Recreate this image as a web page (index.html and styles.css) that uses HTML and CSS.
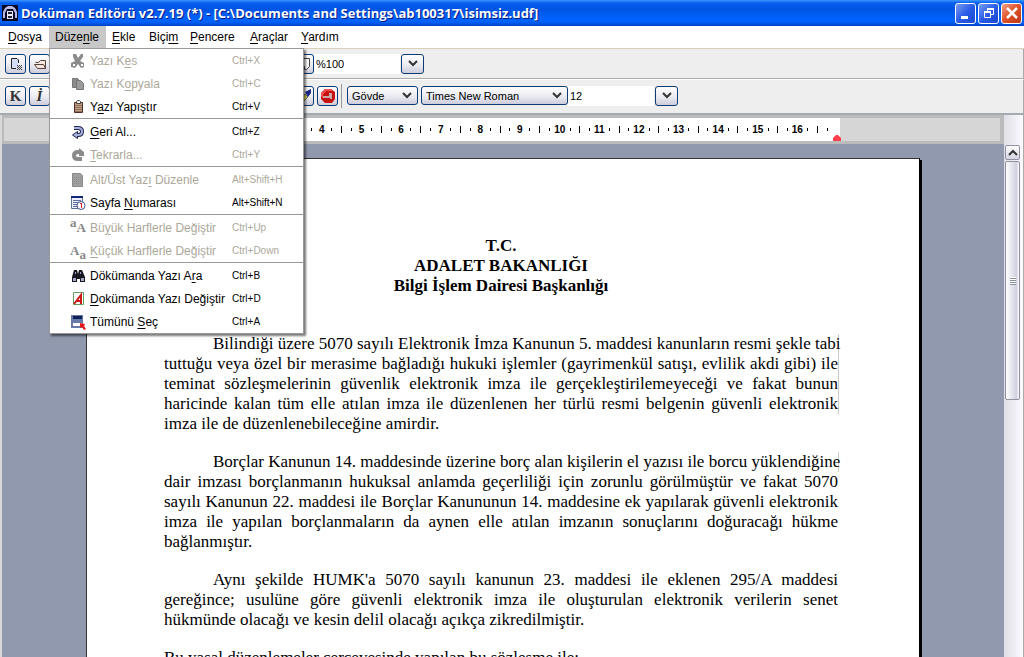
FILE: index.html
```html
<!DOCTYPE html>
<html lang="tr">
<head>
<meta charset="utf-8">
<title>Doküman Editörü</title>
<link rel="stylesheet" href="styles.css">
</head>
<body>
<div class="app">
<header class="titlebar">
<svg class="logo" width="16" height="16" viewBox="0 0 16 16"><path fill="#080820" d="M0 0h16v16H0z"/><path fill="#b8b8e8" d="M1 13V7l2-4 3-2h4l3 2 2 4v6h-2V8l-2-4H5L3 8v5z"/><path fill="#e8e8ff" d="M5 6h6v8H5z"/><path fill="#223" d="M6 7h4v2H6zM6 11h4v2H6z"/></svg>
<h1 class="title">Doküman Editörü v2.7.19 (*) - [C:\Documents and Settings\ab100317\isimsiz.udf]</h1>
<div class="winbtns">
<button class="winbtn" aria-label="Simge durumuna küçült"><svg width="18" height="18"><path fill="#fff" d="M4 12h7v3H4z"/></svg></button>
<button class="winbtn" aria-label="Önceki boyut"><svg width="18" height="18" fill="none" stroke="#fff"><path d="M7.500 7V4.500h6v6H11M4.500 8.500h6v5h-6z"/><path stroke-width="2" d="M7 5h7M4 8h7"/></svg></button>
<button class="winbtn close" aria-label="Kapat"><svg width="18" height="18"><path stroke="#fff" stroke-width="2.500" d="M4 4l10 10M14 4L4 14"/></svg></button>
</div>
</header>
<nav class="menubar">
<button><u>D</u>osya</button><button class="open">Düze<u>n</u>le</button><button><u>E</u>kle</button><button>Biçi<u>m</u></button><button><u>P</u>encere</button><button><u>A</u>raçlar</button><button><u>Y</u>ardım</button>
<div class="menu">
<button class="item" disabled><svg width="16" height="16"><path fill="#8b8b8b" d="M3 1h3l2 4 3-4h2v3l-3 4 4 2v4l-3 1-3-4-3 4-4-1v-4l4-2-2-4z"/><path fill="#fff" d="M3 11h2v2H3zM11 11h2v2h-2z"/></svg><span>Yazı K<u>e</u>s</span><kbd>Ctrl+X</kbd></button>
<button class="item" disabled><svg width="16" height="16"><path fill="#8b8b8b" stroke="#777" d="M2.500 2.500h5l2 2v7h-7z"/><path fill="#9b9b9b" stroke="#777" d="M6.500 4.500h4l3 3v6h-7z"/></svg><span>Yazı K<u>o</u>pyala</span><kbd>Ctrl+C</kbd></button>
<button class="item"><svg width="16" height="16"><path fill="#c0a088" stroke="#503028" d="M4.500 3.500h8v10h-8z"/><path stroke="#907058" stroke-width="7" stroke-dasharray="1 1" d="M8.500 6v7"/><path fill="#eee" stroke="#444" d="M6.500 4.500v-2l1-1h2l1 1v2z"/></svg><span>Y<u>a</u>zı Yapıştır</span><kbd>Ctrl+V</kbd></button>
<hr>
<button class="item"><svg width="16" height="16"><path fill="none" stroke="#202850" stroke-width="4" d="M4 4h4q4 0 4 3.500T8 11H6"/><path fill="#a8b0e0" stroke="#202850" d="M7.500 7.500v7l-5-3.500z"/><path fill="none" stroke="#a8b0e0" stroke-width="2" d="M4 4h4q4 0 4 3.500T8 11H6"/></svg><span><u>G</u>eri Al...</span><kbd>Ctrl+Z</kbd></button>
<button class="item" disabled><svg width="16" height="16"><path fill="none" stroke="#8b8b8b" stroke-width="4" d="M10 5H8Q4 5 4 8.500T8 12h4"/><path fill="#8b8b8b" d="M9 1l5 4v4H9z"/></svg><span><u>T</u>ekrarla...</span><kbd>Ctrl+Y</kbd></button>
<hr>
<button class="item" disabled><svg width="16" height="16"><path fill="#a0a0a0" stroke="#8b8b8b" d="M2.500 1.500h8l2 2v11h-10z"/><path stroke="#8b8b8b" stroke-dasharray="1 1" d="M4 5.500h8M4 7.500h8M4 9.500h8M4 11.500h8"/></svg><span>Alt/Üst Yaz<u>ı</u> Düzenle</span><kbd>Alt+Shift+H</kbd></button>
<button class="item"><svg width="16" height="16"><path fill="#eef" stroke="#607098" d="M1.500 1.500h11v12h-11z"/><path fill="#102878" d="M1 1h12v2H1z"/><path stroke="#6070a0" d="M3 5.500h8M3 7.500h5M3 9.500h4M3 11.500h4"/><circle cx="11" cy="10.500" r="4" fill="#fff" stroke="#405090"/><path fill="#e02020" d="M10 8h2v5h-1v-4h-1z"/></svg><span>Sayfa <u>N</u>umarası</span><kbd>Alt+Shift+N</kbd></button>
<hr>
<button class="item" disabled><span class="glyph"><sup>a</sup>A</span><span>Bü<u>y</u>ük Harflerle Değiştir</span><kbd>Ctrl+Up</kbd></button>
<button class="item" disabled><span class="glyph">A<sub>a</sub></span><span><u>K</u>üçük Harflerle Değiştir</span><kbd>Ctrl+Down</kbd></button>
<hr>
<button class="item"><svg width="16" height="16"><path fill="#181820" d="M4 2h3l1 4 1-4h3l3 7v5h-5v-3H7v3H2V9z"/><path fill="#a0a8c8" d="M3 10h3v3H3zM11 10h3v3h-3zM5 4h1v2H5zM10 4h1v2h-1z"/></svg><span>Dökümanda Yazı A<u>r</u>a</span><kbd>Ctrl+B</kbd></button>
<button class="item"><svg width="16" height="16"><path fill="#fff" stroke="#60a060" d="M3.500 1.500h10v12h-10z"/><path fill="none" stroke="#d01818" stroke-width="2" d="M4 13l7-9v9M7 10h4"/></svg><span><u>D</u>okümanda Yazı Değiştir</span><kbd>Ctrl+D</kbd></button>
<button class="item"><svg width="16" height="16"><path fill="#6878a8" d="M1 1h12v13H1z"/><path fill="#102058" d="M3 2h9v3H3z"/><path fill="#fff" d="M3 9h9v3H3z"/><path fill="#e81818" d="M10 9l5 1-1 2 2 3-2 1-2-3-2 1z"/></svg><span>Tümünü <u>S</u>eç</span><kbd>Ctrl+A</kbd></button>
</div>
</nav>
<div class="toolbar">
<div class="group">
<button class="tool" aria-label="Yeni"><svg width="16" height="16"><path fill="#d4dcfa" d="M4 3h6v9H4z"/><path fill="none" stroke="#222" d="M10.500 7V4l-1.500-1.500H3.500v10H8"/><path fill="#444" d="M9 9h1v1H9zM11 9h1v1h-1zM13 9h1v1h-1zM10 10h1v1h-1zM12 10h1v1h-1zM9 11h1v1H9zM11 11h1v1h-1zM13 11h1v1h-1zM10 12h1v1h-1zM12 12h1v1h-1zM9 13h1v1H9zM11 13h1v1h-1zM13 13h1v1h-1z"/></svg></button>
<button class="tool" aria-label="Aç"><svg width="16" height="16"><path fill="#f4e8e0" stroke="#5a4038" d="M3.500 6.500h3l2-2h5v8h-8l-3-4h9l2 4"/></svg></button>
</div>
<button class="tool" aria-label="Görünüm"><svg width="16" height="16"><path fill="#fff" stroke="#444" d="M4.500 2.500h9v8l-3 3h-2v-3h-4z"/></svg></button>
<input class="field" aria-label="Yakınlaştırma" value="%100">
<button class="tool drop" aria-label="Yakınlaştırma seç"><svg width="10" height="7"><path class="chev" d="M1 1l4 4 4-4"/></svg></button>
</div>
<div class="toolbar second">
<div class="group">
<button class="tool letter">K</button>
<button class="tool letter italic">İ</button>
</div>
<button class="tool" aria-label="Biçim boyacısı"><svg width="16" height="16"><path fill="#d8d850" stroke="#777" d="M5 11l4-5 3 3-4 4z"/><path fill="#182888" d="M9 4l6-3v4l-3 4z"/></svg></button>
<button class="tool" aria-label="Dur"><svg width="18" height="18"><path fill="#c81010" d="M6 2h6l4 3v7l-3 4H6l-4-4V6z"/><path fill="#f05050" d="M6 2h6l2 2H7L4 8v3L2 9V6z"/><path fill="#c8a8a8" d="M4 9h6V6h3v6h-2v-1H4z"/></svg></button>
<span class="divider"></span>
<span class="pick style"><select aria-label="Stil"><option>Gövde</option></select><svg width="10" height="7"><path class="chev" d="M1 1l4 4 4-4"/></svg></span>
<span class="pick font"><select aria-label="Yazı tipi"><option>Times New Roman</option></select><svg width="10" height="7"><path class="chev" d="M1 1l4 4 4-4"/></svg></span>
<input class="field size" aria-label="Boyut" value="12">
<button class="tool drop" aria-label="Boyut seç"><svg width="10" height="7"><path class="chev" d="M1 1l4 4 4-4"/></svg></button>
</div>
<main class="work">
<section class="view">
<div class="ruler">
<div class="scale">
<div class="cell"><i></i><b>4</b><i></i><s></s></div><div class="cell"><i></i><b>5</b><i></i><s></s></div><div class="cell"><i></i><b>6</b><i></i><s></s></div><div class="cell"><i></i><b>7</b><i></i><s></s></div><div class="cell"><i></i><b>8</b><i></i><s></s></div><div class="cell"><i></i><b>9</b><i></i><s></s></div><div class="cell"><i></i><b>10</b><i></i><s></s></div><div class="cell"><i></i><b>11</b><i></i><s></s></div><div class="cell"><i></i><b>12</b><i></i><s></s></div><div class="cell"><i></i><b>13</b><i></i><s></s></div><div class="cell"><i></i><b>14</b><i></i><s></s></div><div class="cell"><i></i><b>15</b><i></i><s></s></div><div class="cell"><i></i><b>16</b><i></i><s></s></div>
<i class="last"></i>
<svg class="marker" width="8" height="6"><path fill="#ff404c" d="M0 6V3l3-3h2l3 3v3z"/></svg>
</div>
</div>
<div class="desk">
<article class="page">
<h2>T.C.<br>ADALET BAKANLIĞI<br>Bilgi İşlem Dairesi Başkanlığı</h2>
<p class="para"><span class="first edge">Bilindiği üzere 5070 sayılı Elektronik İmza Kanunun 5. maddesi kanunların resmi şekle tabi</span> <span class="edge">tuttuğu veya özel bir merasime bağladığı hukuki işlemler (gayrimenkül satışı, evlilik akdi gibi) ile</span> <span class="edge">teminat sözleşmelerinin güvenlik elektronik imza ile gerçekleştirilemeyeceği ve fakat bunun</span> <span class="edge">haricinde kalan tüm elle atılan imza ile düzenlenen her türlü resmi belgenin güvenli elektronik</span> <span class="end">imza ile de düzenlenebileceğine amirdir.</span></p>
<p class="para"><span class="first edge">Borçlar Kanunun 14. maddesinde üzerine borç alan kişilerin el yazısı ile borcu yüklendiğine</span> <span>dair imzası borçlanmanın hukuksal anlamda geçerliliği için zorunlu görülmüştür ve fakat 5070</span> <span>sayılı Kanunun 22. maddesi ile Borçlar Kanununun 14. maddesine ek yapılarak güvenli elektronik</span> <span>imza ile yapılan borçlanmaların da aynen elle atılan imzanın sonuçlarını doğuracağı hükme</span> <span class="end">bağlanmıştır.</span></p>
<p class="para"><span class="first">Aynı şekilde HUMK'a 5070 sayılı kanunun 23. maddesi ile eklenen 295/A maddesi</span> <span>gereğince; usulüne göre güvenli elektronik imza ile oluşturulan elektronik verilerin senet</span> <span class="end">hükmünde olacağı ve kesin delil olacağı açıkça zikredilmiştir.</span></p>
<p class="para"><span class="end">Bu yasal düzenlemeler çerçevesinde yapılan bu sözleşme ile;</span></p>
</article>
</div>
</section>
<aside class="scroll">
<button class="up" aria-label="Yukarı"><svg width="10" height="7"><path class="chev" d="M1 6l4-4 4 4"/></svg></button>
<div class="thumb"><span></span></div>
</aside>
</main>
</div>
</body>
</html>
```
FILE: styles.css
```css
* { box-sizing: border-box; }
body { margin: 0; font: 12px "Liberation Sans", Arial, sans-serif; color: #000; }
button, input, select { font: inherit; color: inherit; margin: 0; padding: 0; }
svg { display: block; flex: none; }
.app { display: flex; flex-direction: column; height: 100vh; overflow: hidden; background: #eee; }

.titlebar { flex: none; display: flex; align-items: center; height: 26px; padding: 0 2px; gap: 3px; background: linear-gradient(#3c94ff 0, #0860f0 3px, #0054e3 9px, #0062fb 18px, #0062fb 22px, #0040c8 26px); }
.title { flex: 1; margin: 0; font: bold 13px/18px "Open Sans", "Noto Sans", sans-serif; color: #fff; white-space: nowrap; text-shadow: 1px 1px #0a1883; }
.winbtns { display: flex; gap: 2px; }
.winbtn { width: 21px; height: 21px; display: grid; place-items: center; border: 1px solid #fff; border-radius: 3px; background: linear-gradient(135deg, #7a9cf0, #2a5ce8 50%, #1c48d0); }
.winbtn.close { background: linear-gradient(135deg, #f0a088, #e05028 50%, #b83818); }

.menubar { flex: none; position: relative; z-index: 2; display: grid; grid-template-columns: 48px 57px 37px 41px 60px 51px 50px; height: 23px; padding-left: 1px; background: #fff; border-bottom: 1px solid #d8d0b8; }
.menubar > button { border: 0; background: none; padding: 0 0 0 6px; text-align: left; white-space: nowrap; }
.menubar > button:first-child { padding-left: 7px; }
.menubar > .open { background: #c8c8c8; }
u { text-underline-offset: 2px; }
.menu { position: absolute; left: 49px; top: 22px; width: 255px; border: 1px solid #999; background: #fff; box-shadow: 2px 2px 2px #0008; }
.menu hr { margin: 0; height: 2px; border: 0; border-top: 1px solid #999; }
.item { display: grid; grid-template-columns: 20px 142px 1fr; align-items: center; width: 100%; height: 23px; padding-left: 20px; border: 0; background: #fff; text-align: left; white-space: nowrap; }
.item:disabled { color: #aca899; }
.item kbd { font: 10px "Liberation Sans", Arial, sans-serif; }
.glyph { font: bold 13px/16px "Liberation Serif", serif; color: #888; }
.glyph sup, .glyph sub { font-size: 13px; line-height: 0; }

.toolbar { flex: none; display: flex; align-items: center; height: 30px; padding-left: 5px; background: #eee; border-bottom: 1px solid #aaa; border-right: 1px solid #aaa; }
.toolbar.second { height: 36px; border-top: 1px solid #fff; border-bottom: 2px solid #a4aab0; padding-bottom: 2px; }
.group { display: flex; gap: 3px; width: 288px; }
.tool { flex: none; width: 21px; height: 20px; display: grid; place-items: center; border: 1px solid #0c3c74; border-radius: 3px; background: linear-gradient(#fff, #e8e8f0 60%, #ccccdc); overflow: hidden; }
.second .tool { margin-right: 3px; }
.second .group .tool { margin-right: 0; }
.tool.letter { font: bold 15px/18px "Liberation Serif", serif; color: #333; }
.tool.italic { font-style: italic; }
.field { width: 86px; height: 20px; padding-left: 2px; border: 0; background: #fff; font-size: 11px; }
.tool.drop { width: 23px; margin-left: 1px; }
.chev { fill: none; stroke: #333; stroke-width: 2; }
.divider { width: 1px; height: 24px; margin: 0 5px 0 0; background: #999; }
.pick { display: flex; align-items: center; height: 19px; padding-right: 5px; margin-right: 3px; border: 1px solid #0c3c74; border-radius: 3px; background: linear-gradient(#fff, #e8e8f0 60%, #ccccdc); }
.pick select { flex: 1; min-width: 0; padding-left: 4px; border: 0; background: none; appearance: none; font-size: 11px; }
.pick.style { width: 71px; }
.pick.font { width: 147px; margin-right: 0; }

.work { flex: 1; min-height: 0; display: flex; }
.view { flex: 1; min-width: 0; display: flex; flex-direction: column; border-left: 2px solid #d8d8d8; }
.ruler { flex: none; display: flex; height: 29px; padding-left: 158px; border: solid #bbb; border-width: 3px 4px 3px 2px; background: #d6d6d6; }
.scale { position: relative; display: flex; width: 678px; padding-left: 145px; background: #fff; }
.cell { flex: 1; display: grid; grid-template-columns: 1fr 1fr 1fr 1fr; place-items: center; }
.cell b { font-size: 10px; line-height: 12px; }
.cell i, .last { width: 1px; height: 3px; background: #000; }
.cell s { width: 1px; height: 7px; background: #000; }
.last { align-self: center; margin: 0 12px 0 5px; }
.marker { position: absolute; right: -1px; bottom: 0; }
.desk { flex: 1; min-height: 0; padding-top: 14px; background: #9199ae; overflow: hidden; }
.page { width: 834px; min-height: 1100px; margin: 0 auto; padding: 77px 81px 0 77px; border: 1px solid #333; border-right-color: #000; background: #fff; box-shadow: 2px 2px #000; font: 17px/20px "Liberation Serif", "Times New Roman", serif; }
.page h2 { margin: 0; font-size: 17px; line-height: 20px; text-align: center; }
.para { margin: 18px 0 0; }
.page h2 + .para { margin-top: 38px; }
.para span { display: block; white-space: nowrap; text-align: justify; text-align-last: justify; }
.para .first { padding-left: 49px; }
.para .edge { box-shadow: 1px 0 #ccc; }
.para .end { text-align-last: left; }

.scroll { flex: none; width: 20px; display: flex; flex-direction: column; padding: 30px 3px 0 1px; background: linear-gradient(90deg, #e0dfe6, #fafaff); border-right: 1px solid #aaa; }
.up { height: 15px; display: grid; place-items: center; border: 1px solid #9090a0; border-radius: 2px; background: linear-gradient(#fff, #d4d4e4); }
.thumb { height: 239px; margin-top: 1px; display: grid; place-items: center; border: 1px solid #9090a0; border-radius: 2px; background: linear-gradient(90deg, #fff, #d0d0e0 80%, #fff); }
.thumb span { width: 6px; height: 8px; background: repeating-linear-gradient(#fff 0 1px, #8890a0 1px 2px); }
```
